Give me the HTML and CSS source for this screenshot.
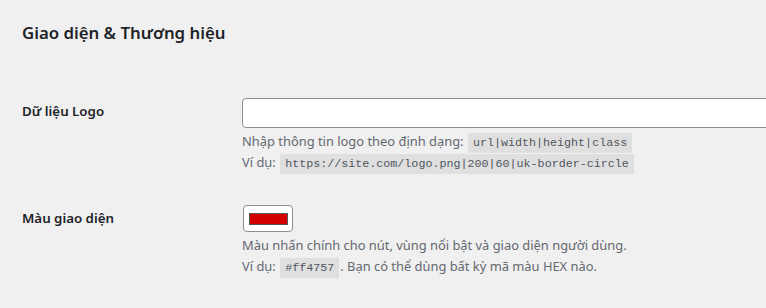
FILE: index.html
```
<!DOCTYPE html>
<html lang="vi">
<head>
<meta charset="utf-8">
<title>Giao diện &amp; Thương hiệu</title>
<link rel="stylesheet" href="styles.css">
</head>
<body>
  <div class="wrap">
    <h2>Giao diện &amp; Thương hiệu</h2>
    <table class="form-table">
      <tr>
        <th><label for="logo_data">Dữ liệu Logo</label></th>
        <td>
          <input type="text" id="logo_data" class="regular-text">
          <p class="description">Nhập thông tin logo theo định dạng: <code>url|width|height|class</code><br>
            Ví dụ: <code>https://site.com/logo.png|200|60|uk-border-circle</code></p>
        </td>
      </tr>
      <tr>
        <th><label for="theme_color">Màu giao diện</label></th>
        <td>
          <input type="color" id="theme_color" value="#d40000">
          <p class="description">Màu nhấn chính cho nút, vùng nổi bật và giao diện người dùng.<br>
            Ví dụ: <code>#ff4757</code>. Bạn có thể dùng bất kỳ mã màu HEX nào.</p>
        </td>
      </tr>
    </table>
  </div>
</body>
</html>
```

FILE: styles.css
```
body {
  margin: 0;
  background-color: #f0f0f1;
  color: #1d2327;
  font-family: "Noto Sans", "Open Sans", sans-serif;
  font-size: 13px;
  line-height: 1.4em;
  overflow: hidden;
}

.wrap {
  margin: 0 0 0 22px;
  padding-top: 1px;
  overflow: hidden;
}

h2 {
  font-size: 16.8px;
  font-weight: 600;
  margin: 22px 0 0;
  line-height: 20px;
}

.form-table {
  border-collapse: collapse;
  margin-top: 40px;
  width: 1000px;
}

.form-table th {
  width: 200px;
  padding: 20px 10px 20px 0;
  text-align: left;
  vertical-align: top;
  font-size: 13.3px;
  font-weight: 600;
  line-height: 1.3;
}

.form-table td {
  padding: 15px 10px;
  vertical-align: top;
}

.regular-text {
  display: block;
  box-sizing: border-box;
  width: 100%;
  height: 30px;
  margin: 0;
  padding: 0 8px;
  border: 1px solid #8c8f94;
  border-radius: 4px;
  background-color: #ffffff;
  font: inherit;
}

input[type="color"] {
  display: block;
  -webkit-appearance: none;
  appearance: none;
  box-sizing: border-box;
  width: 50px;
  height: 27px;
  margin: 0 0 1px 1px;
  padding: 0;
  border: 1px solid #8c8f94;
  border-radius: 4px;
  background-color: #ffffff;
}

input[type="color"]::-webkit-color-swatch-wrapper {
  padding: 7px 4px 6px 5px;
}

input[type="color"]::-webkit-color-swatch {
  border: 1px solid #555555;
  border-radius: 0;
}

.description {
  margin: 3px 0 2px;
  color: #646970;
  font-size: 12.9px;
  line-height: 21px;
}

code {
  padding: 3px 5px 3px;
  margin: 0 1px;
  background-color: rgba(0, 0, 0, 0.07);
  font-family: "Liberation Mono", monospace;
  font-size: 11.7px;
  line-height: 1;
  color: #50575e;
}
```
